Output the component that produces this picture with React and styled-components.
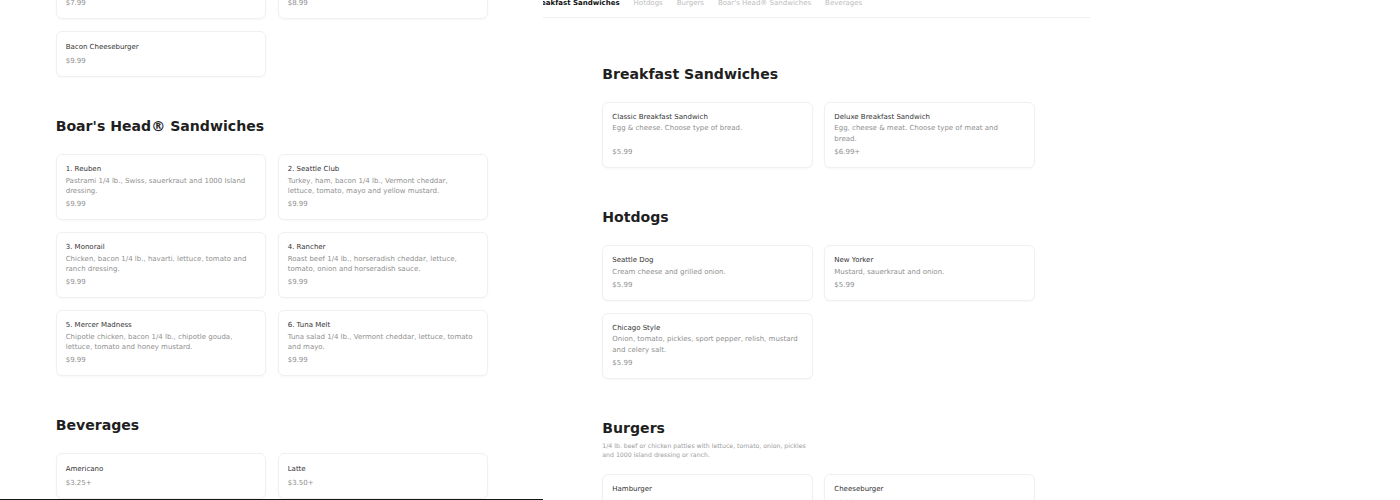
import React, { useLayoutEffect, useRef } from "react"
import styled, { createGlobalStyle } from "styled-components"

const GlobalStyle = createGlobalStyle`
  html, body {
    margin: 0;
    padding: 0;
    background: #fff;
  }
  body {
    font-family: "DejaVu Sans", "Noto Sans", sans-serif;
  }
`

const menu = [
  {
    title: "Breakfast Sandwiches",
    items: [
      { name: "Classic Breakfast Sandwich", desc: "Egg & cheese. Choose type of bread.", price: "$5.99" },
      { name: "Deluxe Breakfast Sandwich", desc: "Egg, cheese & meat. Choose type of meat and bread.", price: "$6.99+" },
    ],
  },
  {
    title: "Hotdogs",
    items: [
      { name: "Seattle Dog", desc: "Cream cheese and grilled onion.", price: "$5.99" },
      { name: "New Yorker", desc: "Mustard, sauerkraut and onion.", price: "$5.99" },
      { name: "Chicago Style", desc: "Onion, tomato, pickles, sport pepper, relish, mustard and celery salt.", price: "$5.99" },
    ],
  },
  {
    title: "Burgers",
    note: "1/4 lb. beef or chicken patties with lettuce, tomato, onion, pickles and 1000 island dressing or ranch.",
    items: [
      { name: "Hamburger", price: "$7.99" },
      { name: "Cheeseburger", price: "$8.99" },
      { name: "Bacon Cheeseburger", price: "$9.99" },
    ],
  },
  {
    title: "Boar's Head® Sandwiches",
    items: [
      { name: "1. Reuben", desc: "Pastrami 1/4 lb., Swiss, sauerkraut and 1000 Island dressing.", price: "$9.99" },
      { name: "2. Seattle Club", desc: "Turkey, ham, bacon 1/4 lb., Vermont cheddar, lettuce, tomato, mayo and yellow mustard.", price: "$9.99" },
      { name: "3. Monorail", desc: "Chicken, bacon 1/4 lb., havarti, lettuce, tomato and ranch dressing.", price: "$9.99" },
      { name: "4. Rancher", desc: "Roast beef 1/4 lb., horseradish cheddar, lettuce, tomato, onion and horseradish sauce.", price: "$9.99" },
      { name: "5. Mercer Madness", desc: "Chipotle chicken, bacon 1/4 lb., chipotle gouda, lettuce, tomato and honey mustard.", price: "$9.99" },
      { name: "6. Tuna Melt", desc: "Tuna salad 1/4 lb., Vermont cheddar, lettuce, tomato and mayo.", price: "$9.99" },
    ],
  },
  {
    title: "Beverages",
    items: [
      { name: "Americano", price: "$3.25+" },
      { name: "Latte", price: "$3.50+" },
      { name: "Cappuccino", price: "$3.50+" },
      { name: "Mocha", price: "$3.75+" },
    ],
  },
]

const Page = styled.div`
  display: flex;
  height: 500px;
  overflow: hidden;
`

const Panel = styled.div`
  flex: none;
  width: ${p => p.$width}px;
  height: 500px;
  box-sizing: border-box;
  overflow: hidden;
  border-bottom: ${p => (p.$ruled ? "1px solid #161616" : "none")};
`

const TabBar = styled.div`
  border-bottom: 1px solid #efefef;
`

// horizontally scrolled strip of section links; the trailing padding
// leaves room for the strip to scroll the active tab to the edge
const TabScroller = styled.nav`
  display: flex;
  gap: 14px;
  overflow: hidden;
  white-space: nowrap;
  padding: 0 400px 10.5px ${p => p.$pad}px;
`

const Tab = styled.span`
  flex: none;
  font-size: 7px;
  line-height: 6px;
  font-weight: ${p => (p.$active ? 700 : 400)};
  color: ${p => (p.$active ? "#111" : "#bdbdbd")};
`

const Content = styled.div`
  display: flex;
  flex-direction: column;
  gap: 41px;
  padding: 48px 0 0 ${p => p.$pad}px;
`

const Heading = styled.h2`
  margin: 0;
  font-size: 14.1px;
  line-height: 17px;
  font-weight: 700;
  color: #1f1f1f;
`

const Note = styled.p`
  margin: 4.5px 0 0;
  max-width: 211px;
  font-size: 6.2px;
  line-height: 9px;
  color: #9c9c9c;
`

const Grid = styled.div`
  display: grid;
  grid-template-columns: repeat(2, 210.5px);
  gap: 12px 11.5px;
  margin-top: ${p => (p.$afterNote ? 14.5 : 19.2)}px;
`

const Card = styled.div`
  display: flex;
  flex-direction: column;
  box-sizing: border-box;
  padding: 9.3px 9px;
  border: 1px solid #f0f0f0;
  border-radius: 6px;
  background: #fff;
  box-shadow: 0 1px 2px rgba(0, 0, 0, 0.03);
`

const ItemName = styled.div`
  font-size: 7px;
  line-height: 10px;
  color: #333;
`

const ItemDesc = styled.div`
  margin-top: 1.5px;
  max-width: 188px;
  font-size: 7px;
  line-height: 10.2px;
  color: #8f8f8f;
`

const ItemPrice = styled.div`
  margin-top: auto;
  padding-top: 3px;
  font-size: 7px;
  line-height: 10.5px;
  color: #8f8f8f;
`

function MenuView({ width, pad, scrollTop = 0, tabScroll = 0, ruled }) {
  const panelRef = useRef(null)
  const tabsRef = useRef(null)

  useLayoutEffect(() => {
    panelRef.current.scrollTop = scrollTop
    tabsRef.current.scrollLeft = tabScroll
  }, [scrollTop, tabScroll])

  return (
    <Panel ref={panelRef} $width={width} $ruled={ruled}>
      <TabBar>
        <TabScroller ref={tabsRef} $pad={pad}>
          {menu.map((section, i) => (
            <Tab key={section.title} $active={i === 0}>{section.title}</Tab>
          ))}
        </TabScroller>
      </TabBar>
      <Content $pad={pad}>
        {menu.map(section => (
          <section key={section.title}>
            <Heading>{section.title}</Heading>
            {section.note && <Note>{section.note}</Note>}
            <Grid $afterNote={!!section.note}>
              {section.items.map(item => (
                <Card key={item.name}>
                  <ItemName>{item.name}</ItemName>
                  <ItemDesc>{item.desc}</ItemDesc>
                  <ItemPrice>{item.price}</ItemPrice>
                </Card>
              ))}
            </Grid>
          </section>
        ))}
      </Content>
    </Panel>
  )
}

export default function App() {
  return (
    <>
      <GlobalStyle />
      <Page>
        <MenuView width={543} pad={55.7} scrollTop={500} ruled />
        <MenuView width={547} pad={59.3} tabScroll={70} />
      </Page>
    </>
  )
}
